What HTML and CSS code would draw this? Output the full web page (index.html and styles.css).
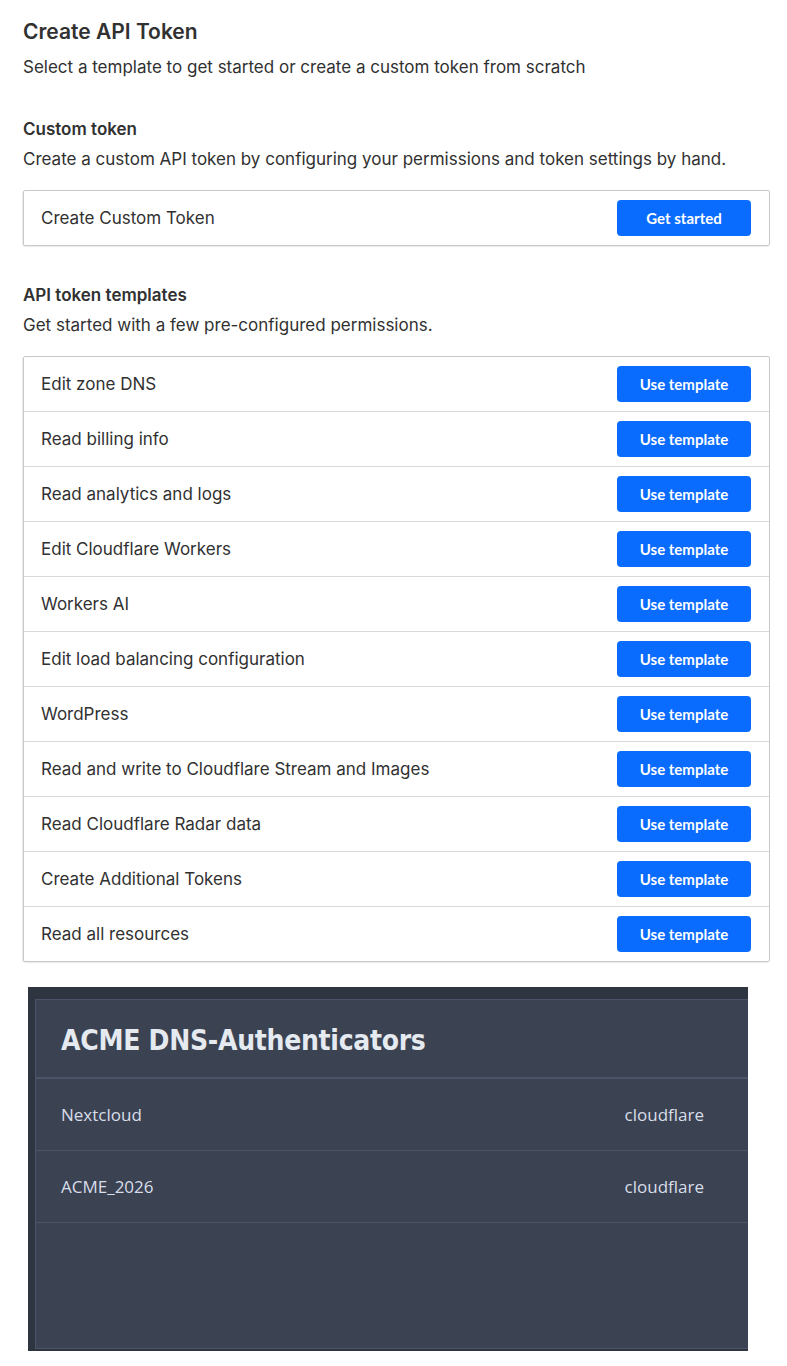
FILE: index.html
```html
<!DOCTYPE html>
<html lang="en">
<head>
    <meta charset="UTF-8">
    <meta name="viewport" content="width=device-width, initial-scale=1.0">
    <title>Create API Token</title>
    <link rel="stylesheet" href="styles.css">
</head>
<body>

    <div class="page">
        <header class="page-head">
            <h1>Create API Token</h1>
            <p>Select a template to get started or create a custom token from scratch</p>
        </header>

        <section class="group">
            <h2>Custom token</h2>
            <p>Create a custom API token by configuring your permissions and token settings by hand.</p>
            <div class="card">
                <div class="row">
                    <span>Create Custom Token</span>
                    <button class="btn">Get started</button>
                </div>
            </div>
        </section>

        <section class="group">
            <h2>API token templates</h2>
            <p>Get started with a few pre-configured permissions.</p>
            <div class="card">
                <div class="row"><span>Edit zone DNS</span><button class="btn">Use template</button></div>
                <div class="row"><span>Read billing info</span><button class="btn">Use template</button></div>
                <div class="row"><span>Read analytics and logs</span><button class="btn">Use template</button></div>
                <div class="row"><span>Edit Cloudflare Workers</span><button class="btn">Use template</button></div>
                <div class="row"><span>Workers AI</span><button class="btn">Use template</button></div>
                <div class="row"><span>Edit load balancing configuration</span><button class="btn">Use template</button></div>
                <div class="row"><span>WordPress</span><button class="btn">Use template</button></div>
                <div class="row"><span>Read and write to Cloudflare Stream and Images</span><button class="btn">Use template</button></div>
                <div class="row"><span>Read Cloudflare Radar data</span><button class="btn">Use template</button></div>
                <div class="row"><span>Create Additional Tokens</span><button class="btn">Use template</button></div>
                <div class="row"><span>Read all resources</span><button class="btn">Use template</button></div>
            </div>
        </section>
    </div>

    <!-- Панель из другого приложения -->
    <div class="dark-frame">
        <div class="dark-panel">
            <h3>ACME DNS-Authenticators</h3>
            <div class="dark-row"><span>Nextcloud</span><span>cloudflare</span></div>
            <div class="dark-row"><span>ACME_2026</span><span>cloudflare</span></div>
        </div>
    </div>

</body>
</html>
```

FILE: styles.css
```css
* {
    margin: 0;
    padding: 0;
    box-sizing: border-box;
}

body {
    font-family: 'Inter', 'Liberation Sans', sans-serif;
    color: #313131;
    background: #fff;
}

.page {
    padding: 18px 17px 0 23px;
}

.page-head h1 {
    font-size: 21px;
    line-height: 28px;
    font-weight: 600;
    margin-bottom: 9px;
}

.page-head p {
    font-size: 17px;
    line-height: 24px;
}

.group {
    margin-top: 38px;
}

.group + .group {
    margin-top: 37px;
}

.group h2 {
    font-size: 17px;
    line-height: 24px;
    font-weight: 600;
    margin-bottom: 6px;
}

.group p {
    font-size: 17px;
    line-height: 24px;
    margin-bottom: 19px;
}

.card {
    border: 1px solid #c8c8c8;
    border-radius: 2px;
    box-shadow: -1px 1px 1px rgba(0, 0, 0, 0.08);
}

.row {
    display: flex;
    justify-content: space-between;
    align-items: center;
    height: 55px;
    padding: 0 18px 0 17px;
    font-size: 17px;
    border-top: 1px solid #d9d9d9;
}

.row:first-child {
    border-top: none;
    height: 54px;
}

.btn {
    width: 134px;
    height: 36px;
    background: #0a6cff;
    color: #fff;
    border: none;
    border-radius: 4px;
    font-family: 'Lato', 'Liberation Sans', sans-serif;
    font-weight: 700;
    font-size: 15px;
    cursor: pointer;
}

/* Тёмная панель */
.dark-frame {
    width: 720px;
    height: 364px;
    margin: 25px 0 0 28px;
    padding: 12px 0 2px 7px;
    background: #2e3440;
}

.dark-panel {
    height: 100%;
    background: #3b4252;
    border: 1px solid #4a5367;
    border-right: none;
}

.dark-panel h3 {
    height: 79px;
    display: flex;
    align-items: center;
    padding: 3px 0 0 25px;
    font-family: 'DejaVu Sans Condensed', 'Liberation Sans Narrow', sans-serif;
    font-size: 28px;
    font-weight: 700;
    letter-spacing: -0.3px;
    color: #e5e9f0;
    border-bottom: 2px solid #4a5367;
}

.dark-row {
    display: flex;
    justify-content: space-between;
    align-items: center;
    height: 72px;
    padding: 0 44px 0 25px;
    font-family: 'Open Sans', 'Liberation Sans', sans-serif;
    font-size: 17px;
    color: #d8dee9;
    border-bottom: 1px solid #4a5367;
}
```
